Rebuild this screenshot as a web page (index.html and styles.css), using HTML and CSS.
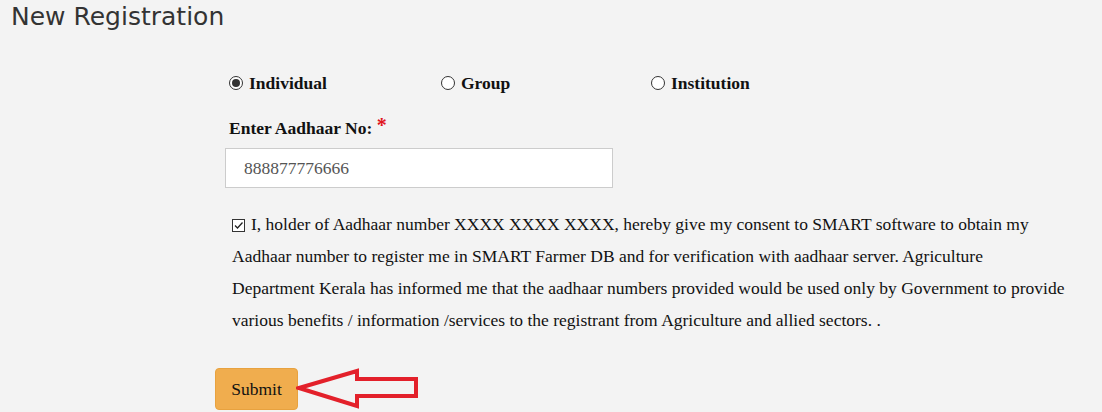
FILE: index.html
```html
<!DOCTYPE html>
<html lang="en">

<head>
    <meta charset="UTF-8">
    <meta name="viewport" content="width=device-width, initial-scale=1.0">
    <title>New Registration</title>
    <link rel="stylesheet" href="styles.css">
</head>

<body>
    <h1 class="page-title">New Registration</h1>

    <div class="reg-form">
        <div class="type-row">
            <label class="type-option"><span class="radio checked"></span>Individual</label>
            <label class="type-option"><span class="radio"></span>Group</label>
            <label class="type-option"><span class="radio"></span>Institution</label>
        </div>

        <div class="field-label">Enter Aadhaar No: <span class="required">*</span></div>
        <div class="aadhaar-input">888877776666</div>

        <p class="consent">
            <span class="checkbox">
                <svg width="11" height="11" viewBox="0 0 11 11">
                    <path d="M2 5.5 L4.5 8 L9.5 2.5" fill="none" stroke="#222" stroke-width="1.3"/>
                </svg>
            </span>I, holder of Aadhaar number XXXX XXXX XXXX, hereby give my consent to SMART software to obtain my Aadhaar number to register me in SMART Farmer DB and for verification with aadhaar server. Agriculture Department Kerala has informed me that the aadhaar numbers provided would be used only by Government to provide various benefits / information /services to the registrant from Agriculture and allied sectors. .
        </p>

        <div class="submit-row">
            <button class="submit-btn">Submit</button>
            <svg class="arrow" width="124" height="42" viewBox="0 0 124 42">
                <path d="M3 20 L61 3 L61 11 L120 11 L120 28 L61 28 L61 38 Z" fill="none" stroke="#e3202a" stroke-width="4" stroke-linejoin="miter"/>
            </svg>
        </div>
    </div>
</body>

</html>
```

FILE: styles.css
```css
body {
    margin: 0;
    background-color: #f3f3f3;
    font-family: "Liberation Serif", "Times New Roman", serif;
    font-size: 17.5px;
    color: #111;
}

.page-title {
    margin: 0;
    padding: 2px 0 0 11px;
    font-family: "DejaVu Sans", Verdana, sans-serif;
    font-size: 25px;
    font-weight: normal;
    line-height: 30px;
    color: #333;
}

.reg-form {
    margin-left: 225px;
    width: 841px;
}

.type-row {
    display: grid;
    grid-template-columns: 212px 210px auto;
    margin-top: 41px;
    padding-left: 4px;
    font-weight: bold;
}

.type-option {
    display: flex;
    align-items: center;
    gap: 6px;
    line-height: 20px;
}

.radio {
    width: 12px;
    height: 12px;
    border: 1px solid #333;
    border-radius: 50%;
    background: #fff;
    display: flex;
    align-items: center;
    justify-content: center;
}

.radio.checked::after {
    content: "";
    width: 8px;
    height: 8px;
    border-radius: 50%;
    background: #333;
}

.field-label {
    margin-top: 25px;
    padding-left: 4px;
    font-weight: bold;
    line-height: 20px;
}

.required {
    color: #e0151d;
    font-size: 20px;
    vertical-align: top;
    line-height: 14px;
}

.aadhaar-input {
    margin-top: 10px;
    width: 368px;
    height: 38px;
    padding-left: 18px;
    border: 1px solid #ccc;
    background: #fff;
    color: #555;
    line-height: 38px;
}

.consent {
    margin: 20px 0 0 0;
    padding-left: 7px;
    line-height: 32px;
}

.checkbox {
    display: inline-flex;
    align-items: center;
    justify-content: center;
    width: 11px;
    height: 11px;
    border: 1px solid #333;
    background: #fff;
    margin-right: 6px;
    vertical-align: -1px;
}

.submit-row {
    display: flex;
    align-items: center;
    margin-top: 32px;
    margin-left: -10px;
}

.submit-btn {
    width: 83px;
    height: 42px;
    border: 1px solid #e8a23f;
    border-radius: 4px;
    background-color: #f0ad4e;
    font-family: "Liberation Serif", "Times New Roman", serif;
    font-size: 17.5px;
    color: #111;
}

.arrow {
    margin-left: -2px;
}
```
